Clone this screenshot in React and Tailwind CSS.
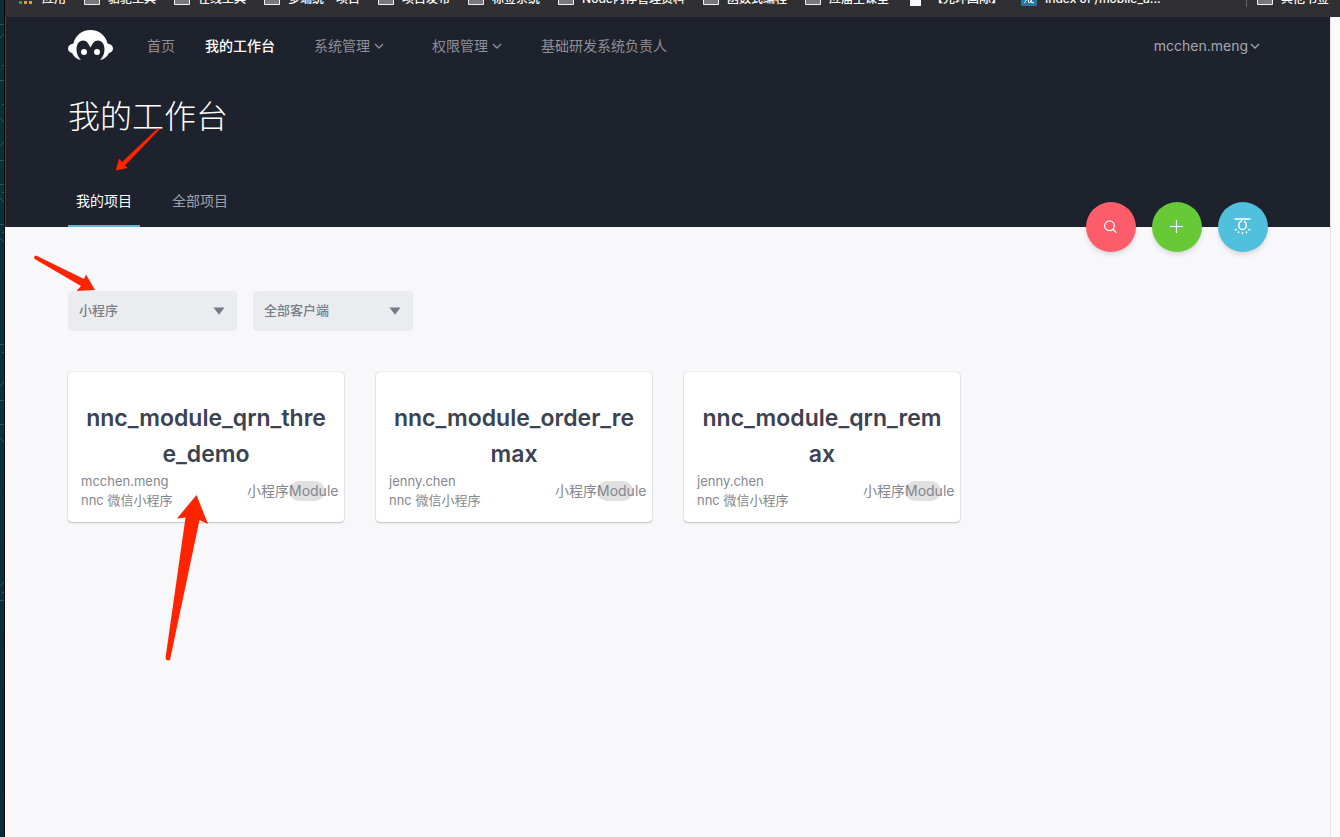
import React from 'react';

const bookmarks = [
  { label: '应用', icon: 'apps' },
  { label: '骆驼工具', icon: 'folder' },
  { label: '在线工具', icon: 'folder' },
  { label: '多端统一项目', icon: 'folder' },
  { label: '项目发布', icon: 'folder' },
  { label: '标签系统', icon: 'folder' },
  { label: 'Node内存管理资料', icon: 'folder' },
  { label: '函数式编程', icon: 'folder' },
  { label: '应届生课堂', icon: 'folder' },
  { label: '【光环国际】', icon: 'file' },
  { label: 'Index of /mobile_a...', icon: 'site' },
];

const projects = [
  { name: 'nnc_module_qrn_three_demo', owner: 'mcchen.meng', client: 'nnc 微信小程序' },
  { name: 'nnc_module_order_remax', owner: 'jenny.chen', client: 'nnc 微信小程序' },
  { name: 'nnc_module_qrn_remax', owner: 'jenny.chen', client: 'nnc 微信小程序' },
];

const BookmarkIcon = ({ type }) => (
  <svg className="w-4 h-4 shrink-0" viewBox="0 0 16 16" aria-hidden="true">
    {type === 'apps' &&
      ['#e2574c', '#e2574c', '#e2574c', '#8f9296', '#8f9296', '#8f9296', '#3f9a5c', '#e0a030', '#e0a030'].map(
        (color, i) => (
          <rect key={i} x={1 + (i % 3) * 5} y={2 + Math.floor(i / 3) * 4} width="3" height="3" fill={color} />
        )
      )}
    {type === 'folder' && <path d="M.5 3.5V2.5h5l1 1.5h9v9.500H.5z" fill="#77777a" stroke="#f2f2f2" />}
    {type === 'file' && <path d="M3 1h7l4 4v10H3z" fill="#fafafa" />}
    {type === 'site' && (
      <>
        <rect width="16" height="15" rx="1.500" fill="#12809e" />
        <path d="M5 7v3l-2 2M7 8l1 4M10 7v4l3 1M12 7l-3 5" stroke="#fff" fill="none" />
      </>
    )}
  </svg>
);

const BookmarkBar = () => (
  <nav className="h-[17px] shrink-0 overflow-hidden flex items-end bg-[#302f33] text-xs font-medium text-white">
    <div className="flex-1 h-9 flex items-center gap-[18px] pl-[13px]">
      {bookmarks.map((item) => (
        <a key={item.label} href="#" className="flex items-center gap-2 whitespace-nowrap">
          <BookmarkIcon type={item.icon} />
          {item.label}
        </a>
      ))}
    </div>
    <a href="#" className="h-9 flex items-center gap-2 pr-[11px]">
      <span className="w-px h-4 mr-0.5 bg-[#66666a]" />
      <BookmarkIcon type="folder" />
      其他书签
    </a>
  </nav>
);

const Logo = () => (
  <svg className="w-[45px] h-8" viewBox="0 0 45 32" aria-hidden="true">
    <path
      d="M22.500 0C13.500 0 7 6 5.500 13.500C2 14 0 16 0 18.500C0 21 2 22.500 4 23C6 27 9 29.500 13 30C10.500 27.500 8.500 24 8.500 19.500C8.500 14 11 10.500 15 10.500C19 10.500 20.500 14 22.500 17.500C24.500 14 26 10.500 30 10.500C34 10.500 36.500 14 36.500 19.500C36.500 24 34.500 27.500 32 30C36 29.500 39 27 41 23C43 22.500 45 21 45 18.500C45 16 43 14 39.500 13.500C38 6 31.500 0 22.500 0Z"
      fill="#fff"
    />
    <circle cx="16" cy="22" r="3" fill="#fff" />
    <circle cx="29" cy="22" r="3" fill="#fff" />
  </svg>
);

const Chevron = () => (
  <svg className="w-2.5 h-2.5" viewBox="0 0 10 10" fill="none" stroke="currentColor" strokeWidth="1.300" aria-hidden="true">
    <path d="M1 3l4 4 4-4" />
  </svg>
);

const NavMenu = ({ label }) => (
  <button type="button" className="px-6 flex items-center gap-1">
    {label}
    <Chevron />
  </button>
);

const ActionButton = ({ label, className, children }) => (
  <button
    type="button"
    aria-label={label}
    className={`w-[50px] h-[50px] rounded-full flex items-center justify-center text-white shadow-md ${className}`}
  >
    {children}
  </button>
);

const Header = () => (
  <header className="relative bg-[#1d222d] px-[62px] border-l border-[#3d414b]">
    <div className="h-[58px] flex items-center justify-between text-sm text-[#8e9097]">
      <nav className="flex items-center">
        <a href="#" aria-label="NNC" className="mr-[19px]">
          <Logo />
        </a>
        <a href="#" className="px-[15px]">首页</a>
        <a href="#" className="px-[15px] font-medium text-white">我的工作台</a>
        <NavMenu label="系统管理" />
        <NavMenu label="权限管理" />
        <a href="#" className="px-[15px]">基础研发系统负责人</a>
      </nav>
      <button type="button" className="mr-2 flex items-center gap-0.5 text-[#a5a7ad]">
        mcchen.meng
        <Chevron />
      </button>
    </div>

    <h1 className="pt-4 text-[32px] leading-[52px] font-light text-white">我的工作台</h1>

    <div className="mt-8 flex gap-6 text-sm text-[#a0a2a8]">
      <a href="#" className="h-[52px] px-2 leading-[52px] text-white border-b-2 border-[#5fb8d3]">
        我的项目
      </a>
      <a href="#" className="h-[52px] px-2 leading-[52px]">全部项目</a>
    </div>

    {/* floating actions straddle the header edge */}
    <div className="absolute right-[62px] -bottom-[25px] flex gap-4">
      <ActionButton label="搜索" className="bg-[#fd5c6b]">
        <svg className="w-3.5 h-3.5" viewBox="0 0 14 14" fill="none" stroke="currentColor" strokeWidth="1.200">
          <circle cx="5.500" cy="5.800" r="4.900" />
          <path d="M9 9.500L12.500 12.800" />
        </svg>
      </ActionButton>
      <ActionButton label="新建" className="bg-[#67c935]">
        <svg className="w-3.5 h-3.5" viewBox="0 0 14 14" fill="none" stroke="currentColor" strokeWidth="1.200">
          <path d="M6.500 0v13M0 6.500h13" />
        </svg>
      </ActionButton>
      <ActionButton label="提示" className="bg-[#50c0dd]">
        <svg className="w-[18px] h-[18px]" viewBox="0 0 18 18" fill="none" stroke="currentColor" strokeWidth="1.400">
          <path d="M.5 1h16M7.500 1v2.500M7.200 3.200C3.500 5 4 11.500 8.500 11.500C13 11.500 13.500 5 10 3.200" />
          <path d="M.8 12.200l2-.9M4 15l1-1.500M8.500 16.200v-2M13 15l-1-1.500M16.200 12.200l-2-.9" />
        </svg>
      </ActionButton>
    </div>
  </header>
);

const Filter = ({ id, label, option, className }) => (
  <div className={`relative ${className}`}>
    <label htmlFor={id} className="sr-only">{label}</label>
    <select
      id={id}
      className="w-full h-10 px-[11px] appearance-none rounded bg-[#ebecf0] text-[13px] font-medium text-[#7a7e89]"
    >
      <option>{option}</option>
    </select>
    <svg className="absolute right-3 top-4 w-3 h-2 pointer-events-none" viewBox="0 0 12 8" aria-hidden="true">
      <path d="M.5 .5h11L6 7.800z" fill="#757b87" />
    </svg>
  </div>
);

const ProjectCard = ({ project }) => (
  <article className="w-[276px] h-[150px] pt-7 rounded bg-white shadow-[0_0_1px_rgba(0,0,0,0.3),0_1px_2px_rgba(0,0,0,0.2)]">
    <h2 className="px-4 text-[23px] leading-9 font-semibold text-center break-all text-[#3b4252]">{project.name}</h2>
    <div className="flex items-center justify-between pl-[13px] pr-[19px] text-[#84878f]">
      <p className="text-[13px] leading-[19px]">
        {project.owner}
        <br />
        {project.client}
      </p>
      <p className="flex items-center text-sm leading-5">
        小程序
        <span className="w-9 h-5 rounded-full bg-[#e0e0e1] whitespace-nowrap">Module</span>
      </p>
    </div>
  </article>
);

// red pointers drawn over the page
const Pointers = () => (
  <svg
    className="absolute left-0 top-0 w-[240px] h-[680px] pointer-events-none"
    viewBox="0 0 240 680"
    fill="#ff2400"
    aria-hidden="true"
  >
    <path d="M158 128L122 162L119 158.500L115.800 170.500L128 168L125 165.500L159.500 129.500Z" />
    <path d="M35 255.500Q33 258 35.500 259.500L81 286L76.500 291L95 290L86 274.500L84 279L37 256Z" />
    <path d="M196.500 495L177 518.500L185.500 517.500L165.500 658Q166 661.500 170 660L199.500 520L208 524Z" />
  </svg>
);

// sliver of desktop wallpaper beside the window
const Wallpaper = () => (
  <div className="w-[5px] shrink-0 overflow-hidden bg-linear-to-b from-[#0a3036] via-[#06333c] to-[#0b2b3d] border-r border-black">
    <svg className="w-1 h-[620px]" viewBox="0 0 4 620" fill="none" stroke="#2c5960" aria-hidden="true">
      <path d="M0 24.500h4M0 80.500h4M2 65.500h2M2 104.500h2M0 160.500h4M0 184.500h4M2 192.500h2M0 224.500h4M2 232.500h2M0 344.500h4M2 352.500h2M0 400.500h4M0 424.500h4M2 592.500h2M0 600.500h4" />
      <path d="M0 38l4-4M0 118l4 4M0 146l4-4M0 198l4 4M0 238l4 4M0 386l4-4M0 438l4 4M0 586l4-4" />
    </svg>
  </div>
);

const App = () => {
  return (
    <div className='relative min-h-screen flex font-["Inter","Noto_Sans_CJK_SC",sans-serif]'>
      <Wallpaper />
      <div className="flex-1 min-w-0 flex flex-col">
        <BookmarkBar />
        <div className="flex-1 flex bg-[#fafafa]">
          <div className="flex-1 min-w-0 bg-[#f8f8fb]">
            <Header />
            <main className="px-[63px] pt-16">
              <form className="flex gap-4">
                <Filter id="type" label="项目类型" option="小程序" className="w-[169px]" />
                <Filter id="client" label="客户端" option="全部客户端" className="w-40" />
              </form>
              <section className="mt-[41px] flex flex-wrap gap-8">
                {projects.map((project) => (
                  <ProjectCard key={project.name} project={project} />
                ))}
              </section>
            </main>
          </div>
          <div className="w-2.5 shrink-0 border-l border-[#e6e6e8]" />
        </div>
      </div>
      <Pointers />
    </div>
  );
};

export default App;
